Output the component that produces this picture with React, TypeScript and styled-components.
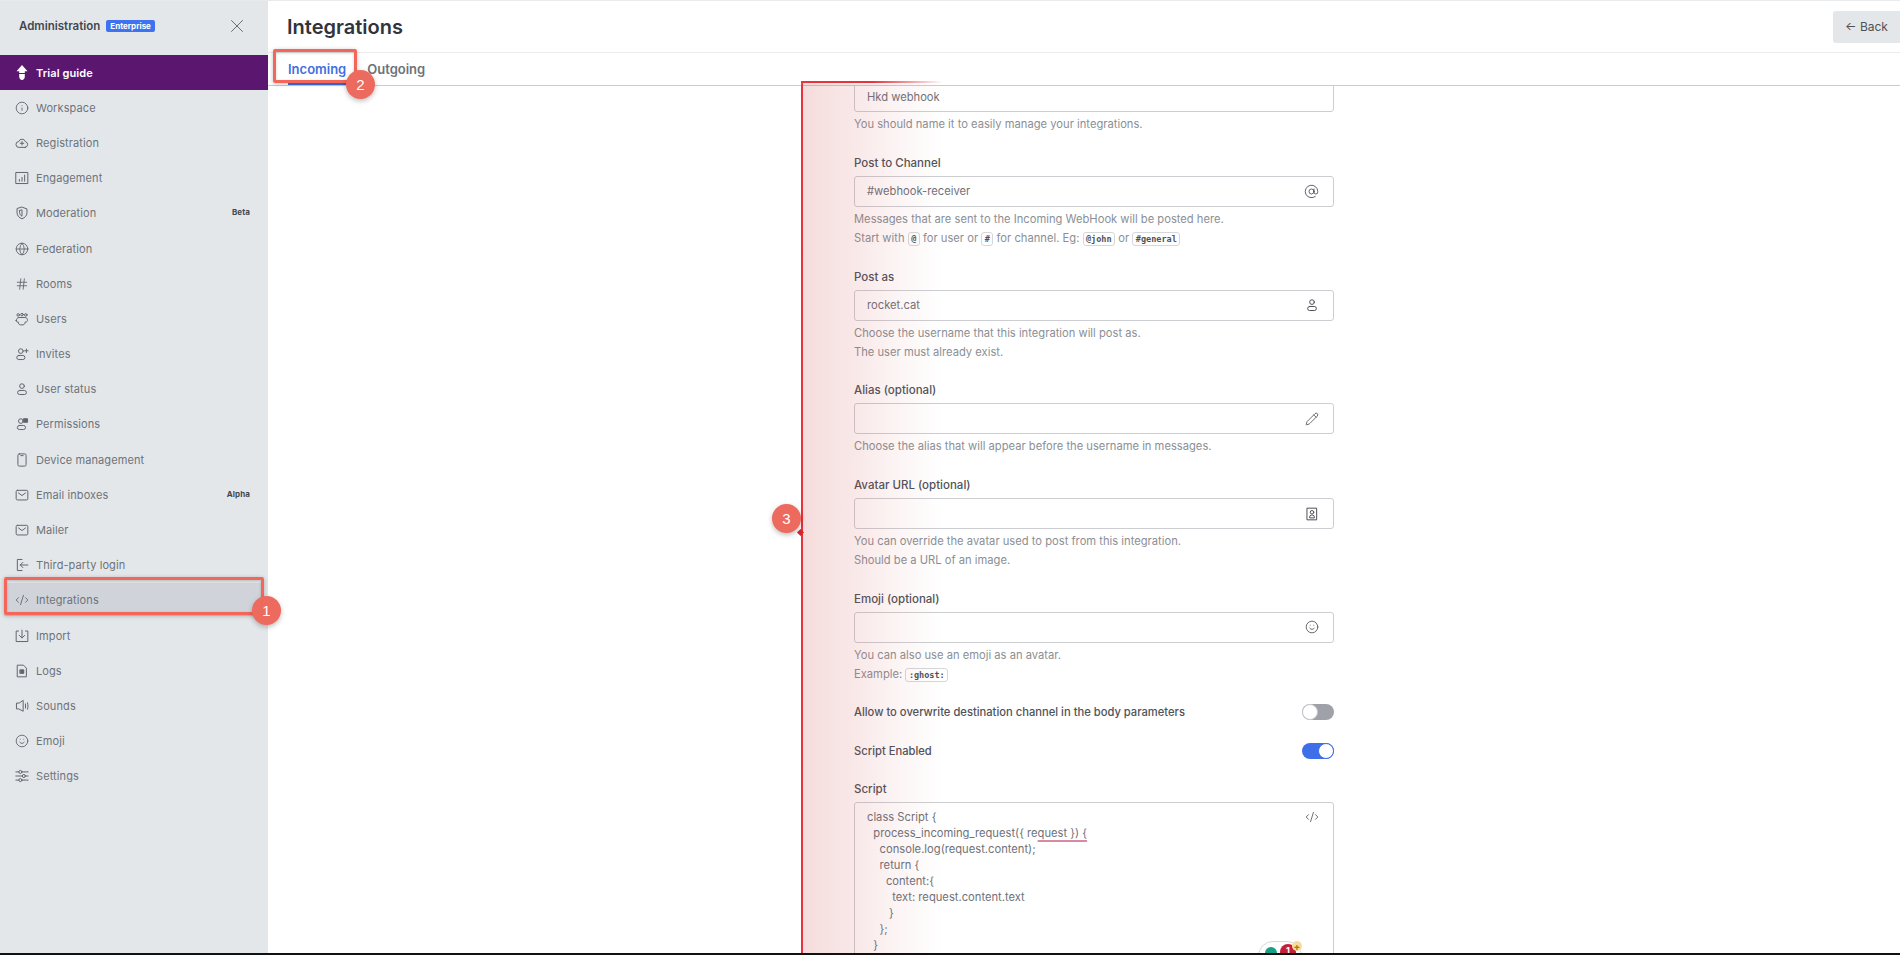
import React from "react";
import styled, { createGlobalStyle } from "styled-components";
import {
  AtSign,
  CodeXml,
  Globe,
  Hash,
  Info,
  Pencil,
  Smile,
  X,
} from "lucide-react";

const line = { fill: "none", stroke: "currentColor", strokeWidth: 1.7, strokeLinecap: "round", strokeLinejoin: "round" } as const;

function Glyph({ size = 14, children }: { size?: number; children: React.ReactNode }) {
  return (
    <svg width={size} height={size} viewBox="0 0 24 24" {...line}>
      {children}
    </svg>
  );
}

const PersonIcon = () => (
  <Glyph>
    <circle cx="12" cy="7" r="4" />
    <rect x="4.5" y="14.5" width="15" height="7" rx="3.5" />
  </Glyph>
);

const icons: Record<string, React.ReactNode> = {
  trial: (
    <svg width="14" height="15" viewBox="0 0 14 15" fill="#fff">
      <path d="M7 0 12.5 6.2H9.8V8H4.2V6.2H1.5Z" />
      <path d="M4.2 9H9.8V11.8C9.8 13.5 8.5 15 7 15S4.2 13.5 4.2 11.8Z" />
    </svg>
  ),
  workspace: <Info size={14} strokeWidth={1.5} />,
  registration: (
    <Glyph>
      <path d="M17.5 19.5H7a5 5 0 0 1-.6-10 6 6 0 0 1 11.4.2 5 5 0 0 1-.3 9.8Z" />
      <path d="M12 9.5v6M9 12.5h6" />
    </Glyph>
  ),
  engagement: (
    <Glyph>
      <rect x="2" y="2.5" width="20" height="19" />
      <path d="M7.5 17.5v-3M12 17.5V11M16.5 17.5V7" />
    </Glyph>
  ),
  moderation: (
    <Glyph>
      <path d="M12 2 20.5 5v6.5c0 5-3.5 8.5-8.5 10.5C7 20 3.5 16.5 3.5 11.5V5Z" />
      <path d="M8 7.5 12 6.5v11c-2.5-1-4-3.5-4-6Z" />
    </Glyph>
  ),
  federation: <Globe size={14} strokeWidth={1.5} />,
  rooms: <Hash size={14} strokeWidth={1.5} />,
  users: (
    <Glyph>
      <circle cx="5.5" cy="5" r="2.2" />
      <circle cx="12" cy="4.5" r="2.2" />
      <circle cx="18.5" cy="5" r="2.2" />
      <path d="M2.5 14.5c0-3 1.5-5 4.5-5h10c3 0 4.5 2 4.5 5 0 1.5-1.5 2.5-3 2.5h-1c0 2.5-1.5 5-3.5 5h-5c-2 0-3.5-2.5-3.5-5h-1c-1.5 0-3-1-3-2.5Z" />
    </Glyph>
  ),
  invites: (
    <Glyph>
      <circle cx="10" cy="7" r="4" />
      <rect x="3" y="14.5" width="14" height="7" rx="3.5" />
      <path d="M19.5 3.5v6M16.5 6.5h6" />
    </Glyph>
  ),
  status: <PersonIcon />,
  permissions: (
    <Glyph>
      <circle cx="10" cy="7" r="4" />
      <rect x="4" y="14.5" width="14" height="7" rx="3.5" />
      <rect x="15" y="3" width="6.5" height="6" fill="currentColor" />
    </Glyph>
  ),
  device: (
    <Glyph>
      <rect x="5" y="1.5" width="14" height="21" rx="2.5" />
      <path d="M10 4.5h4" />
    </Glyph>
  ),
  mail: (
    <Glyph>
      <rect x="2" y="4" width="20" height="16.5" rx="2" />
      <path d="m6 8.5 6 4.5 6-4.5" />
    </Glyph>
  ),
  login: (
    <Glyph>
      <path d="M12 2.5H4v19h8" />
      <path d="M22 12H9M13.5 7.5 9 12l4.5 4.5" />
    </Glyph>
  ),
  integrations: <CodeXml size={14} strokeWidth={1.5} />,
  import: (
    <Glyph>
      <path d="M6 3.5H2v18h20v-18h-4" />
      <path d="M12 2v13M7.5 11l4.5 4.5 4.5-4.5" />
    </Glyph>
  ),
  logs: (
    <Glyph>
      <path d="M4.5 2h10l5 5v15h-15Z" />
      <rect x="9" y="10" width="6" height="6" fill="currentColor" />
    </Glyph>
  ),
  sounds: (
    <Glyph>
      <path d="M14 3v18L6.5 17H2.5V7h4Z" />
      <path d="M18 8.5v7M21.5 6.5c1 3.5 1 7.5 0 11" />
    </Glyph>
  ),
  emoji: <Smile size={14} strokeWidth={1.5} />,
  settings: (
    <Glyph>
      <path d="M1.5 5h5M12 5h10.5M1.5 12h11M18 12h4.5M1.5 19h5M12 19h10.5" />
      <circle cx="9.2" cy="5" r="2.6" />
      <circle cx="15.2" cy="12" r="2.6" />
      <circle cx="9.2" cy="19" r="2.6" />
    </Glyph>
  ),
};

const navItems = [
  { id: "workspace", label: "Workspace" },
  { id: "registration", label: "Registration" },
  { id: "engagement", label: "Engagement" },
  { id: "moderation", label: "Moderation", tag: "Beta" },
  { id: "federation", label: "Federation" },
  { id: "rooms", label: "Rooms" },
  { id: "users", label: "Users" },
  { id: "invites", label: "Invites" },
  { id: "status", label: "User status" },
  { id: "permissions", label: "Permissions" },
  { id: "device", label: "Device management" },
  { id: "mail", label: "Email inboxes", tag: "Alpha" },
  { id: "mail", label: "Mailer" },
  { id: "login", label: "Third-party login" },
  { id: "integrations", label: "Integrations", selected: true },
  { id: "import", label: "Import" },
  { id: "logs", label: "Logs" },
  { id: "sounds", label: "Sounds" },
  { id: "emoji", label: "Emoji" },
  { id: "settings", label: "Settings" },
];

const scriptLines = [
  "class Script {",
  "  process_incoming_request({ request }) {",
  "    console.log(request.content);",
  "    return {",
  "      content:{",
  "        text: request.content.text",
  "       }",
  "    };",
  "  }",
];

function App() {
  return (
    <>
      <GlobalStyle />
      <Page>
        <Sidebar>
          <SidebarHeader>
            <SidebarTitle>Administration</SidebarTitle>
            <EnterpriseTag>Enterprise</EnterpriseTag>
            <CloseButton>
              <X size={22} strokeWidth={1} />
            </CloseButton>
          </SidebarHeader>
          <TrialItem>
            <ItemIcon>{icons.trial}</ItemIcon>
            Trial guide
          </TrialItem>
          {navItems.map((item) => (
            <NavItem key={item.label} $selected={item.selected}>
              <ItemIcon>{icons[item.id]}</ItemIcon>
              {item.label}
              {item.tag && <ItemTag>{item.tag}</ItemTag>}
            </NavItem>
          ))}
        </Sidebar>

        <Main>
          <PageHeader>
            <PageTitle>Integrations</PageTitle>
            <BackButton>← Back</BackButton>
          </PageHeader>
          <Tabs>
            <Tab $active>Incoming</Tab>
            <Tab>Outgoing</Tab>
          </Tabs>
          <Content>
            <Form>
              <Field>
                <InputBox>Hkd webhook</InputBox>
                <Hint>You should name it to easily manage your integrations.</Hint>
              </Field>
              <Field>
                <Label>Post to Channel</Label>
                <InputBox>
                  #webhook-receiver
                  <InputIcon>
                    <AtSign size={15} strokeWidth={1.4} />
                  </InputIcon>
                </InputBox>
                <Hint>Messages that are sent to the Incoming WebHook will be posted here.</Hint>
                <Hint>
                  Start with <Kbd>@</Kbd> for user or <Kbd>#</Kbd> for channel. Eg: <Kbd>@john</Kbd> or{" "}
                  <Kbd>#general</Kbd>
                </Hint>
              </Field>
              <Field>
                <Label>Post as</Label>
                <InputBox>
                  rocket.cat
                  <InputIcon>
                    <PersonIcon />
                  </InputIcon>
                </InputBox>
                <Hint>Choose the username that this integration will post as.</Hint>
                <Hint>The user must already exist.</Hint>
              </Field>
              <Field>
                <Label>Alias (optional)</Label>
                <InputBox>
                  <InputIcon>
                    <Pencil size={14} strokeWidth={1.4} />
                  </InputIcon>
                </InputBox>
                <Hint>Choose the alias that will appear before the username in messages.</Hint>
              </Field>
              <Field>
                <Label>Avatar URL (optional)</Label>
                <InputBox>
                  <InputIcon>
                    <Glyph>
                      <rect x="4" y="2" width="16" height="20" />
                      <circle cx="12" cy="9" r="3" />
                      <path d="M8 18v-1a3 3 0 0 1 3-3h2a3 3 0 0 1 3 3v1Z" />
                    </Glyph>
                  </InputIcon>
                </InputBox>
                <Hint>You can override the avatar used to post from this integration.</Hint>
                <Hint>Should be a URL of an image.</Hint>
              </Field>
              <Field>
                <Label>Emoji (optional)</Label>
                <InputBox>
                  <InputIcon>
                    <Smile size={14} strokeWidth={1.4} />
                  </InputIcon>
                </InputBox>
                <Hint>You can also use an emoji as an avatar.</Hint>
                <Hint>
                  Example: <Kbd>:ghost:</Kbd>
                </Hint>
              </Field>
              <ToggleRow>
                Allow to overwrite destination channel in the body parameters
                <Toggle />
              </ToggleRow>
              <ToggleRow>
                Script Enabled
                <Toggle $on />
              </ToggleRow>
              <ScriptField>
                <Label>Script</Label>
                <ScriptBox>
                  {scriptLines.map((text, i) =>
                    i === 1 ? (
                      <ScriptLine key={i}>
                        {"  process_incoming_request({ re"}
                        <Misspelled>{"quest }) {"}</Misspelled>
                      </ScriptLine>
                    ) : (
                      <ScriptLine key={i}>{text}</ScriptLine>
                    ),
                  )}
                  <ScriptIcon>
                    <CodeXml size={14} strokeWidth={1.4} />
                  </ScriptIcon>
                </ScriptBox>
              </ScriptField>
            </Form>
          </Content>
        </Main>

        <RedBox $x={4} $y={577} $w={260} $h={38} />
        <RedBox $x={273} $y={49} $w={84} $h={34} />
        <Bracket>
          <BracketNotch />
        </Bracket>
        <Step $x={252} $y={596}>1</Step>
        <Step $x={346} $y={70}>2</Step>
        <Step $x={772} $y={504}>3</Step>

        <SpellWidget>
          <SpellGreen />
          <SpellRed>1</SpellRed>
          <SpellPlus>+</SpellPlus>
        </SpellWidget>
      </Page>
    </>
  );
}

export default App;

const GlobalStyle = createGlobalStyle`
  html, body {
    margin: 0;
    padding: 0;
    background: #fff;
  }

  body {
    font-family: Inter, "Liberation Sans", sans-serif;
  }
`;

const Page = styled.div`
  position: relative;
  display: flex;
  box-sizing: border-box;
  height: 955px;
  overflow: hidden;
  border-top: 1px solid #e8eaec;
  border-bottom: 2px solid #111;
  font-size: 12px;
  color: #6e7279;
`;

const Sidebar = styled.aside`
  flex: 0 0 268px;
  display: flex;
  flex-direction: column;
  background: #e4e7ea;
`;

const SidebarHeader = styled.div`
  flex: 0 0 54px;
  box-sizing: border-box;
  display: flex;
  align-items: center;
  padding: 0 20px 5px 19px;
`;

const SidebarTitle = styled.span`
  font-size: 11.5px;
  font-weight: 600;
  color: #43484f;
`;

const EnterpriseTag = styled.span`
  margin-left: 6px;
  padding: 0 4px;
  height: 12px;
  line-height: 12px;
  border-radius: 2px;
  background: #3f72ee;
  color: #fff;
  font-size: 8px;
  font-weight: 700;
`;

const CloseButton = styled.span`
  display: flex;
  margin-left: auto;
  color: #5e646b;
`;

const NavItem = styled.div<{ $selected?: boolean }>`
  flex: 0 0 35.2px;
  display: flex;
  align-items: center;
  padding: 0 18px 0 15px;
  font-size: 11px;
  letter-spacing: 0.1px;
  color: #6d737a;
  background: ${(p) =>
    p.$selected ? "linear-gradient(#d0d4da, #d0d4da) 4px 0 / 260px 33px no-repeat" : "transparent"};
`;

const TrialItem = styled(NavItem)`
  background: #5b1770;
  color: #fff;
  font-weight: 600;
`;

const ItemIcon = styled.span`
  flex: 0 0 21px;
  display: flex;
  color: #5f656c;
`;

const ItemTag = styled.span`
  margin: 0 0 2px auto;
  font-size: 8px;
  font-weight: 700;
  color: #43484f;
`;

const Main = styled.main`
  flex: 1;
  min-width: 0;
  display: flex;
  flex-direction: column;
`;

const PageHeader = styled.header`
  flex: 0 0 52px;
  display: flex;
  align-items: center;
  justify-content: space-between;
  box-sizing: border-box;
  padding-left: 19px;
  border-bottom: 1px solid #ececee;
`;

const PageTitle = styled.h1`
  margin: 0;
  font-size: 20px;
  font-weight: 600;
  color: #2f343d;
`;

const BackButton = styled.button`
  box-sizing: border-box;
  width: 67px;
  height: 32px;
  border: 0;
  border-radius: 3px 0 0 3px;
  background: #e4e7ea;
  color: #4d5259;
  font: 400 12px Inter, sans-serif;
`;

const Tabs = styled.nav`
  flex: 0 0 32px;
  display: flex;
  gap: 21px;
  box-sizing: border-box;
  padding-left: 20px;
  border-bottom: 1px solid #c9cbcf;
`;

const Tab = styled.span<{ $active?: boolean }>`
  height: 32px;
  box-sizing: border-box;
  padding-top: 8px;
  font-size: 13px;
  font-weight: 600;
  color: ${(p) => (p.$active ? "#3f6fe0" : "#6e7279")};
  border-bottom: 2px solid ${(p) => (p.$active ? "#3f6fe0" : "transparent")};
`;

const Content = styled.div`
  flex: 1;
  min-height: 0;
  overflow: hidden;
  padding-left: 586px;
`;

const Form = styled.div`
  width: 480px;
  margin-top: -5px;
  display: flex;
  flex-direction: column;
`;

const Field = styled.div`
  display: flex;
  flex-direction: column;
  margin-bottom: 18.75px;
`;

const ScriptField = styled(Field)`
  margin-top: -3px;
`;

const Label = styled.label`
  height: 20px;
  margin-bottom: 3px;
  line-height: 20px;
  font-size: 11.5px;
  font-weight: 500;
  color: #4e5359;
`;

const InputBox = styled.div`
  display: flex;
  align-items: center;
  box-sizing: border-box;
  height: 31px;
  padding: 0 14px 0 12px;
  border: 1px solid #ccced2;
  border-radius: 3px;
  font-size: 11.2px;
  color: #6e7279;
`;

const InputIcon = styled.span`
  display: flex;
  margin-left: auto;
  color: #4a4f56;
`;

const Hint = styled.div`
  height: 19px;
  line-height: 19px;
  font-size: 11.2px;
  color: #8b8f95;

  ${InputBox} + & {
    margin-top: 3px;
  }
`;

const Kbd = styled.code`
  padding: 1px 2.5px;
  border: 1px solid #d5d7da;
  border-radius: 3px;
  font-family: "DejaVu Sans Mono", monospace;
  font-size: 8.5px;
  font-weight: 700;
  color: #4e5359;
`;

const ToggleRow = styled.div`
  display: flex;
  align-items: center;
  justify-content: space-between;
  height: 16px;
  margin-bottom: 23px;
  font-size: 11.2px;
  font-weight: 500;
  color: #4e5359;

  ${Field} + & {
    margin-top: 1px;
  }
`;

const Toggle = styled.span<{ $on?: boolean }>`
  display: flex;
  justify-content: ${(p) => (p.$on ? "flex-end" : "flex-start")};
  width: 32px;
  height: 16px;
  border-radius: 8px;
  background: ${(p) => (p.$on ? "#3f6fe8" : "#9ea2a8")};

  &::after {
    content: "";
    box-sizing: border-box;
    width: 16px;
    height: 16px;
    border-radius: 50%;
    border: 1px solid ${(p) => (p.$on ? "#3f6fe8" : "#c9cbcf")};
    background: #fff;
  }
`;

const ScriptBox = styled.div`
  position: relative;
  box-sizing: border-box;
  height: 160px;
  padding: 6px 12px;
  border: 1px solid #ccced2;
  border-radius: 3px;
`;

const ScriptLine = styled.div`
  height: 16px;
  line-height: 16px;
  font-size: 11.2px;
  white-space: pre;
  color: #6e7279;
`;

const Misspelled = styled.span`
  text-decoration: underline #d98aa6 1.5px;
  text-decoration-skip-ink: none;
  text-underline-offset: 3px;
`;

const ScriptIcon = styled.span`
  position: absolute;
  top: 7px;
  right: 14px;
  display: flex;
  color: #4a4f56;
`;

const RedBox = styled.div<{ $x: number; $y: number; $w: number; $h: number }>`
  position: absolute;
  left: ${(p) => p.$x}px;
  top: ${(p) => p.$y - 1}px;
  width: ${(p) => p.$w}px;
  height: ${(p) => p.$h}px;
  box-sizing: border-box;
  border: 3px solid #f4665a;
  border-radius: 2px;
  box-shadow: 0 1px 4px rgba(0, 0, 0, 0.25), inset 0 1px 3px rgba(0, 0, 0, 0.2);
`;

const Step = styled.div<{ $x: number; $y: number }>`
  position: absolute;
  left: ${(p) => p.$x}px;
  top: ${(p) => p.$y - 1}px;
  width: 29px;
  height: 29px;
  border-radius: 50%;
  background: #ec6a5e;
  color: #fff;
  font: 400 15px/29px "Liberation Sans", sans-serif;
  text-align: center;
  box-shadow: 0 2px 5px rgba(0, 0, 0, 0.25);
`;

const Bracket = styled.div`
  position: absolute;
  left: 801px;
  top: 80px;
  width: 140px;
  bottom: 0;
  border-top-left-radius: 4px;
  border-left: 2px solid #e8333f;
  background: linear-gradient(
    90deg,
    rgba(205, 70, 70, 0.19) 0,
    rgba(205, 70, 70, 0.12) 38%,
    rgba(205, 70, 70, 0.05) 70%,
    rgba(205, 70, 70, 0) 100%
  );
  pointer-events: none;

  &::before {
    content: "";
    position: absolute;
    left: -2px;
    top: 0;
    right: 0;
    height: 2px;
    background: linear-gradient(90deg, #e8333f 50%, rgba(232, 51, 63, 0));
  }
`;

const BracketNotch = styled.span`
  position: absolute;
  left: -5px;
  top: 449px;
  width: 5px;
  height: 5px;
  background: #d8232f;
  transform: rotate(45deg);
`;

const SpellWidget = styled.div`
  position: absolute;
  left: 1258px;
  top: 940px;
  display: flex;
  box-sizing: border-box;
  width: 44px;
  height: 30px;
  border: 1px solid #d5d7da;
  border-radius: 15px;
  background: #fff;
`;

const SpellGreen = styled.span`
  position: absolute;
  left: 6px;
  top: 5px;
  width: 12px;
  height: 12px;
  border-radius: 50%;
  background: #15a085;
`;

const SpellRed = styled.span`
  position: absolute;
  left: 21px;
  top: 2px;
  width: 16px;
  height: 16px;
  border-radius: 50%;
  background: #c4203b;
  color: #fff;
  font: 700 9px/14px Inter, sans-serif;
  text-align: center;
`;

const SpellPlus = styled.span`
  position: absolute;
  left: 33px;
  top: -1px;
  width: 10px;
  height: 10px;
  border-radius: 50%;
  background: #f6dd9b;
  color: #a87a10;
  font: 700 10px/10px Inter, sans-serif;
  text-align: center;
`;
